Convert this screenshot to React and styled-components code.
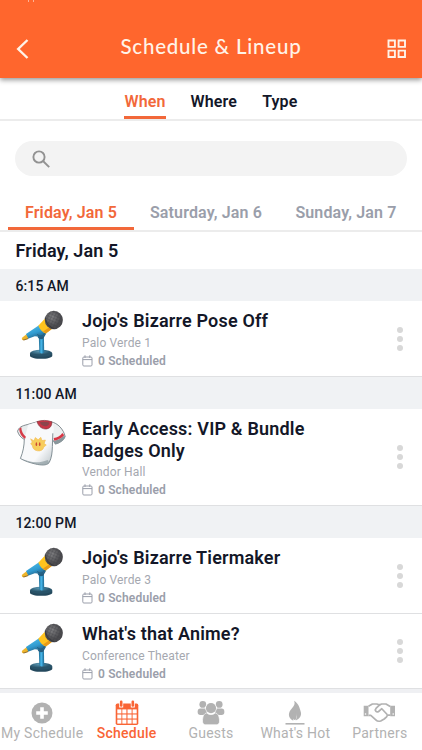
import React from "react";
import styled, { createGlobalStyle } from "styled-components";

const GlobalStyle = createGlobalStyle`
    * {
        box-sizing: border-box;
    }
    body {
        margin: 0;
        background: #fff;
        font-family: Roboto, "Liberation Sans", sans-serif;
        color: #131728;
        overflow: hidden;
    }
`

const Screen = styled.div`
    width: 422px;
    height: 750px;
    display: flex;
    flex-direction: column;
    overflow: hidden;
`, Header = styled.header`
    height: 78px;
    flex-shrink: 0;
    display: flex;
    flex-direction: column;
    background: #ff662d;
    box-shadow: 0 2px 5px rgba(0, 0, 0, 0.42);
    z-index: 1;
`, StatusBar = styled.div`
    height: 20px;
    padding-left: 28px;
    display: flex;
    gap: 4px;
`, StatusMark = styled.span`
    width: 1px;
    height: 2px;
    background: #ffb294;
`, HeaderRow = styled.div`
    height: 58px;
    padding: 0 15px 0 16px;
    display: flex;
    align-items: center;
    justify-content: space-between;
    color: #fff3e8;
`, Title = styled.h1`
    margin: 0 0 6px 5px;
    font-family: Lato, sans-serif;
    font-size: 20.5px;
    font-weight: 500;
    letter-spacing: 0.78px;
    line-height: 24px;
`, FilterTabs = styled.nav`
    height: 43px;
    flex-shrink: 0;
    display: flex;
    justify-content: center;
    gap: 25px;
    border-bottom: 2px solid #ececec;
`, FilterTab = styled.span`
    height: 41px;
    padding-top: 14px;
    font-size: 16px;
    font-weight: 600;
    line-height: 19px;
    letter-spacing: 0.15px;
    border-bottom: 3px solid ${({ $active }) => ($active ? "#f2683a" : "transparent")};
    color: ${({ $active }) => ($active ? "#f2683a" : "#131728")};
`, SearchBar = styled.div`
    height: 35px;
    flex-shrink: 0;
    margin: 20px 15px 0;
    padding-left: 17px;
    display: flex;
    align-items: center;
    border-radius: 18px;
    background: #f3f3f3;
`, DayTabs = styled.nav`
    height: 56px;
    flex-shrink: 0;
    padding: 0 8px;
    display: flex;
    border-bottom: 2px solid #ececec;
`, DayTab = styled.span`
    width: ${({ $width }) => $width}px;
    height: 54px;
    padding-top: 27px;
    text-align: center;
    white-space: nowrap;
    font-size: 16px;
    font-weight: 600;
    line-height: 19px;
    letter-spacing: 0.15px;
    border-bottom: 3px solid ${({ $active }) => ($active ? "#f2683a" : "transparent")};
    color: ${({ $active }) => ($active ? "#f2683a" : "#9a9eaa")};
`, DateHeading = styled.h2`
    height: 37px;
    flex-shrink: 0;
    margin: 0;
    padding-left: 15.5px;
    font-size: 18px;
    font-weight: 600;
    line-height: 37px;
    letter-spacing: 0.12px;
`, TimeBar = styled.div`
    height: 32px;
    flex-shrink: 0;
    padding-left: 15.5px;
    background: #f0f2f4;
    font-size: 14px;
    font-weight: 500;
    line-height: 34px;
    letter-spacing: 0.1px;
`, Row = styled.article`
    height: ${({ $height }) => $height}px;
    flex-shrink: 0;
    padding: 4px 19px 0 10px;
    display: flex;
    border-bottom: 1px solid #dfe0e2;
`, RowBody = styled.div`
    flex: 1;
    padding: 5px 0 0 12px;
`, EventTitle = styled.h3`
    width: 250px;
    margin: 0;
    font-size: 18px;
    font-weight: 600;
    line-height: 21.5px;
    letter-spacing: 0.18px;
`, Place = styled.p`
    margin: 2px 0 0;
    font-size: 12px;
    line-height: 18px;
    letter-spacing: 0.15px;
    color: #a5a8b0;
`, Scheduled = styled.p`
    margin: 0;
    display: flex;
    align-items: center;
    gap: 5px;
    font-size: 12px;
    font-weight: 600;
    line-height: 18px;
    letter-spacing: 0.15px;
    color: #9a9eaa;
`, MenuDots = styled.div`
    align-self: center;
    margin-bottom: 4px;
    display: flex;
    flex-direction: column;
    gap: 3px;
`, Dot = styled.i`
    width: 6px;
    height: 6px;
    border-radius: 50%;
    background: #d8d8d8;
`, BottomNav = styled.footer`
    height: 61px;
    flex-shrink: 0;
    display: grid;
    grid-template-columns: repeat(5, 1fr);
    border-top: 4px solid #eff0f3;
`, NavItem = styled.div`
    display: flex;
    flex-direction: column;
    align-items: center;
    font-size: 14px;
    font-weight: ${({ $active }) => ($active ? 500 : 400)};
    line-height: 16px;
    letter-spacing: 0.25px;
    white-space: nowrap;
    color: ${({ $active }) => ($active ? "#f96535" : "#b2b2b2")};
`, NavIcon = styled.div`
    height: 32px;
    display: flex;
    align-items: center;
    padding-top: 7px;
`

const BackIcon = () => (
    <svg width="14" height="22" viewBox="0 0 14 22" fill="none" stroke="currentColor" strokeWidth="2.4">
        <path d="M11.5 2 2.2 11l9.3 9" />
    </svg>
)

const GridIcon = () => (
    <svg width="20" height="20" viewBox="0 0 20 20" fill="none" stroke="currentColor" strokeWidth="1.9">
        <path d="M1.5 1.5h6.4v6.4H1.5zM11.6 1.5H18v6.4h-6.4zM1.5 11.6h6.4V18H1.5zM11.6 11.6H18V18h-6.4z" />
    </svg>
)

const SearchIcon = () => (
    <svg width="18" height="18" viewBox="0 0 18 18" fill="none" stroke="#929292" strokeWidth="1.9">
        <circle cx="7" cy="7" r="5.6" />
        <path d="m11 11 6.2 6.1" />
    </svg>
)

const SmallCalendar = () => (
    <svg width="11" height="12" viewBox="0 0 11 12" fill="none" stroke="currentColor" strokeWidth="1">
        <rect x="0.8" y="2" width="9.2" height="9" rx="1.1" />
        <path d="M.8 4.6H10M3 .3V3M7.8 .3V3" />
    </svg>
)

const Microphone = () => (
    <svg width="60" height="60" viewBox="0 0 60 60">
        <defs>
            <linearGradient id="pole" x1="0" x2="1">
                <stop offset="0" stopColor="#1d688e" />
                <stop offset=".45" stopColor="#48b9ed" />
                <stop offset="1" stopColor="#1c6790" />
            </linearGradient>
            <linearGradient id="barrel" x1="0" y1="0" x2=".5" y2="1">
                <stop offset="0" stopColor="#55c4ee" />
                <stop offset=".6" stopColor="#319bd0" />
                <stop offset="1" stopColor="#245c7e" />
            </linearGradient>
            <radialGradient id="base" cx=".42" cy=".2">
                <stop offset="0" stopColor="#5a98b3" />
                <stop offset="1" stopColor="#285369" />
            </radialGradient>
            <radialGradient id="head" cx=".4" cy=".35">
                <stop offset="0" stopColor="#808082" />
                <stop offset="1" stopColor="#4b4b4e" />
            </radialGradient>
            <pattern id="mesh" width="3" height="3" patternUnits="userSpaceOnUse" patternTransform="rotate(24)">
                <path d="M0 0h3M0 0v3" stroke="#3c3c41" strokeWidth=".6" />
            </pattern>
        </defs>
        <path d="M20 48.5v2.2c0 4.1 22.3 4.1 22.3 0v-2.2z" fill="#24495d" />
        <ellipse cx="31.1" cy="48.3" rx="11.2" ry="3.5" fill="url(#base)" />
        <path d="m28.8 31 5.1-1 .3 17.5c-1.2 1.2-3.7 1.2-4.9.1z" fill="url(#pole)" />
        <path d="m16 29.1 13-8.8 7.3 8.3-3.2 5.2c-1.9 1-4.8.4-5.6-2.3l-2.7-.3-8.2 3z" fill="url(#barrel)" />
        <path d="M27.4 29.2c1.4 2.6 5.3 2.6 7-1" fill="none" stroke="#245c7e" strokeWidth=".9" />
        <path d="m16.2 29.4 2.2 4.2-4.7 1.5c-1.6.3-2.5-1.4-1.4-2.6z" fill="#eeb52c" />
        <path d="m12.7 34.8 5.1-1.6.5.7-4.5 1.5z" fill="#926b27" />
        <path d="m28.3 20.8 6.2-6.7 8 9.3-6.7 5.1c-3.1-1-5.8-3.6-7.5-7.7z" fill="#ffc31e" />
        <path d="m33 26.4 7.5-5 2 2-6.7 5.1z" fill="#e89b19" />
        <ellipse cx="43.8" cy="15" rx="9" ry="9.3" fill="url(#head)" />
        <ellipse cx="43.8" cy="15" rx="9" ry="9.3" fill="url(#mesh)" />
        <path d="M35.1 12.8c1 5.3 4.2 9.4 9.2 10.9" fill="none" stroke="#353539" strokeWidth=".9" />
    </svg>
)

const Shirt = () => (
    <svg width="60" height="60" viewBox="0 0 60 60">
        <defs>
            <linearGradient id="cloth" x1="0" y1="0" x2="1" y2="1">
                <stop offset=".65" stopColor="#f8f9fb" />
                <stop offset="1" stopColor="#b9c2c6" />
            </linearGradient>
        </defs>
        <path d="M27.5 8.7 17.2 11.6C12 12.9 9 14 7.5 18.3c1.2 3.6 3.2 6.3 6.8 8.1l2.8-1.3z" fill="#e8eced" stroke="#687278" strokeWidth=".8" />
        <path d="M41 8.8c6.7 1.2 12.5 7.4 14.2 14.8-2 4.1-5.5 6.4-9.8 7.5L41 24z" fill="#edf0f1" stroke="#687278" strokeWidth=".8" />
        <path d="M18.3 11.8 27.5 8.7h13.4c3.3 3.7 3.6 7.4 2 12.1l-.5 12.6c-.2 6.2-.7 11.3-3.2 16.2-2.5 3.4-9 2.5-13.8 1.4-5.3-1.3-10.5-2.8-15-5.5 3-7.4 4.2-13.4 4.1-20.2z" fill="url(#cloth)" />
        <path d="M14.3 25.8c0 7.1-1.3 13.2-3.9 19.7 4.5 2.7 9.7 4.2 15 5.5 4.8 1.1 11.3 2 13.8-1.4 2.5-4.9 3-10 3.2-16.2l.4-13.1" fill="none" stroke="#77858b" strokeWidth=".9" />
        <path d="M11 45.5c9.4 3.8 16.6 5.5 26.7 1.4l1.5 2.7c-2.5 3.4-9 2.5-13.8 1.4-5.3-1.3-10.5-2.8-14.4-5.5z" fill="#87969b" opacity=".65" />
        <path d="m43.2 28.2 5.9-2 5.4-3.6.7 1.8c-2 3.5-5.5 5.7-9.8 6.8z" fill="#89979c" />
        <path d="M27 8.6c4.8-1.7 10-1.5 14.8.2.3 3.8-1.6 6.6-5 7.1-4.6.5-8.3-2.3-9.8-7.3z" fill="#c93646" stroke="#81323a" strokeWidth=".7" />
        <path d="M29.7 9.3c3.2-.8 6.6-.7 9.7.3-.2 2.2-1.3 3.5-3.3 3.6-2.8.1-5.1-1.2-6.4-3.9z" fill="#8b454c" />
        <path d="m9.1 15.7 2.2-1.5c.1 4 1.7 7 4.6 9.5l-.9 2.3c-3.6-2.3-5.5-5.9-5.9-10.3z" fill="#d53c49" />
        <path d="M43.7 25.1c3.5-.3 6.5-2.1 8.7-5l1.8 2.2c-2.6 3-6 4.8-10 5.4z" fill="#d63544" />
        <path d="m20.6 25.8 3.2 2 1.6-3.3 2.7 2.3 2.7-2.5 1.2 3.3 3.4-.6-1.2 3.4 2.1 1.7-2.4 1.8c-.7 3.2-3.3 4.4-6.5 3.9-2.8-.4-4.8-2.2-5-5l-1.7-2.1 1.5-1.6z" fill="#f7ce5d" stroke="#f4ba56" strokeWidth=".6" />
        <ellipse cx="26.4" cy="31.2" rx=".8" ry="1.9" fill="#ce4c35" />
        <ellipse cx="29.7" cy="31.2" rx=".8" ry="1.9" fill="#ce4c35" />
    </svg>
)

const PlusCircle = () => (
    <svg width="22" height="22" viewBox="0 0 22 22">
        <circle cx="11" cy="11" r="10.5" fill="currentColor" />
        <path d="M11 5.2v11.6M5.2 11h11.6" stroke="#fff" strokeWidth="3.6" />
    </svg>
)

const CalendarGrid = () => (
    <svg width="24" height="26" viewBox="0 0 24 26">
        <rect x=".7" y="3.5" width="22.6" height="21.5" rx="1.7" fill="currentColor" />
        <path d="M4.2 1.5h4v6h-4zM15.8 1.5h4v6h-4z" fill="#fff" />
        <rect x="4.9" y=".5" width="2.6" height="6.2" rx="1.2" fill="currentColor" />
        <rect x="16.5" y=".5" width="2.6" height="6.2" rx="1.2" fill="currentColor" />
        {[9.4, 14.5, 19.6].map((y) =>
            [2.3, 7.3, 12.5, 17.6].map((x) => <rect key={`${x}-${y}`} x={x} y={y} width="4.1" height="4" fill="#fff" />)
        )}
    </svg>
)

const GuestsIcon = () => (
    <svg width="28" height="26" viewBox="0 0 28 26" fill="currentColor">
        <circle cx="5.8" cy="4.4" r="3.4" />
        <circle cx="22.2" cy="4.4" r="3.4" />
        <rect x=".7" y="8.5" width="9.7" height="6.4" rx="2.7" />
        <rect x="17.6" y="8.5" width="9.7" height="6.4" rx="2.7" />
        <circle cx="14" cy="8.2" r="5.8" fill="#fff" />
        <circle cx="14" cy="8.2" r="5.1" />
        <path d="M9.8 12.9c2.2 2.2 6.2 2.2 8.4 0 3 .6 4.3 3.6 4.3 8.2 0 2.4-1 3.7-3.2 3.7H8.7c-2.2 0-3.2-1.3-3.2-3.7 0-4.6 1.3-7.6 4.3-8.2z" stroke="#fff" strokeWidth=".7" />
    </svg>
)

const FlameIcon = () => (
    <svg width="20" height="26" viewBox="0 0 20 26" fill="currentColor">
        <path d="M9.2.8c1 3.4.1 4.9-2.4 7.7-3.6 4-4.6 8.8 1.5 12.3-.8-3.2.2-5.2 2.8-7.5-.1 2.8 1.4 3.7-.4 7.3 3.9-1.8 6.2-5 5.1-8.5-1.1-3.8-1.7-7.8-6.6-11.3z" />
        <path d="M7.1 13c-.2 2.8.2 5 1.8 7.1l2.2-.5.7-6.4-1.8-2z" />
        <path d="M.5 23h19v1.6H.5z" />
    </svg>
)

const HandshakeIcon = () => (
    <svg width="33" height="22" viewBox="0 0 33 22" fill="none" stroke="currentColor" strokeWidth="1.7" strokeLinejoin="round">
        <path d="M.7 3.8h4.8v10.5H.7zM27.2 3.8H32v10.5h-4.8z" fill="currentColor" stroke="none" />
        <circle cx="2.5" cy="12" r=".8" fill="#fff" stroke="none" />
        <circle cx="30.2" cy="12" r=".8" fill="#fff" stroke="none" />
        <path d="M5.5 4.2 9.4 2h4.4l2.5.9L18.7 2H23l4.2 2.5M5.5 13.3h2.3l5 4.5c1.4 1.5 3.2 1.7 4.9 1.2l3.5-2 2.4-2.2.9-1.7h2.7" />
        <path d="m17.2 2.4-4 3.8c-2 2.1.3 4.7 2.4 3.3l3.2-2.8 5.6 6.1" />
    </svg>
)

const SCHEDULE = [
    { time: "6:15 AM", events: [{ title: "Jojo's Bizarre Pose Off", place: "Palo Verde 1", Icon: Microphone, height: 76 }] },
    { time: "11:00 AM", events: [{ title: "Early Access: VIP & Bundle Badges Only", place: "Vendor Hall", Icon: Shirt, height: 97 }] },
    {
        time: "12:00 PM",
        events: [
            { title: "Jojo's Bizarre Tiermaker", place: "Palo Verde 3", Icon: Microphone, height: 76 },
            { title: "What's that Anime?", place: "Conference Theater", Icon: Microphone, height: 75 },
        ],
    },
]

const NAV = [
    { label: "My Schedule", icon: <PlusCircle /> },
    { label: "Schedule", icon: <CalendarGrid />, active: true },
    { label: "Guests", icon: <GuestsIcon /> },
    { label: "What's Hot", icon: <FlameIcon /> },
    { label: "Partners", icon: <HandshakeIcon /> },
]

const EventRow = ({ title, place, Icon, height }) => (
    <Row $height={height}>
        <Icon />
        <RowBody>
            <EventTitle>{title}</EventTitle>
            <Place>{place}</Place>
            <Scheduled><SmallCalendar />0 Scheduled</Scheduled>
        </RowBody>
        <MenuDots><Dot /><Dot /><Dot /></MenuDots>
    </Row>
)

export default class App extends React.Component {
    render() {
        return (
            <Screen>
                <GlobalStyle />
                <Header>
                    <StatusBar><StatusMark /><StatusMark /></StatusBar>
                    <HeaderRow>
                        <BackIcon />
                        <Title>Schedule &amp; Lineup</Title>
                        <GridIcon />
                    </HeaderRow>
                </Header>
                <FilterTabs>
                    <FilterTab $active>When</FilterTab>
                    <FilterTab>Where</FilterTab>
                    <FilterTab>Type</FilterTab>
                </FilterTabs>
                <SearchBar><SearchIcon /></SearchBar>
                <DayTabs>
                    <DayTab $active $width={126}>Friday, Jan 5</DayTab>
                    <DayTab $width={144}>Saturday, Jan 6</DayTab>
                    <DayTab $width={136}>Sunday, Jan 7</DayTab>
                </DayTabs>
                <DateHeading>Friday, Jan 5</DateHeading>
                {SCHEDULE.map(({ time, events }) => (
                    <React.Fragment key={time}>
                        <TimeBar>{time}</TimeBar>
                        {events.map((event) => <EventRow key={event.title} {...event} />)}
                    </React.Fragment>
                ))}
                <BottomNav>
                    {NAV.map(({ label, icon, active }) => (
                        <NavItem key={label} $active={active}>
                            <NavIcon>{icon}</NavIcon>
                            {label}
                        </NavItem>
                    ))}
                </BottomNav>
            </Screen>
        )
    }
}
